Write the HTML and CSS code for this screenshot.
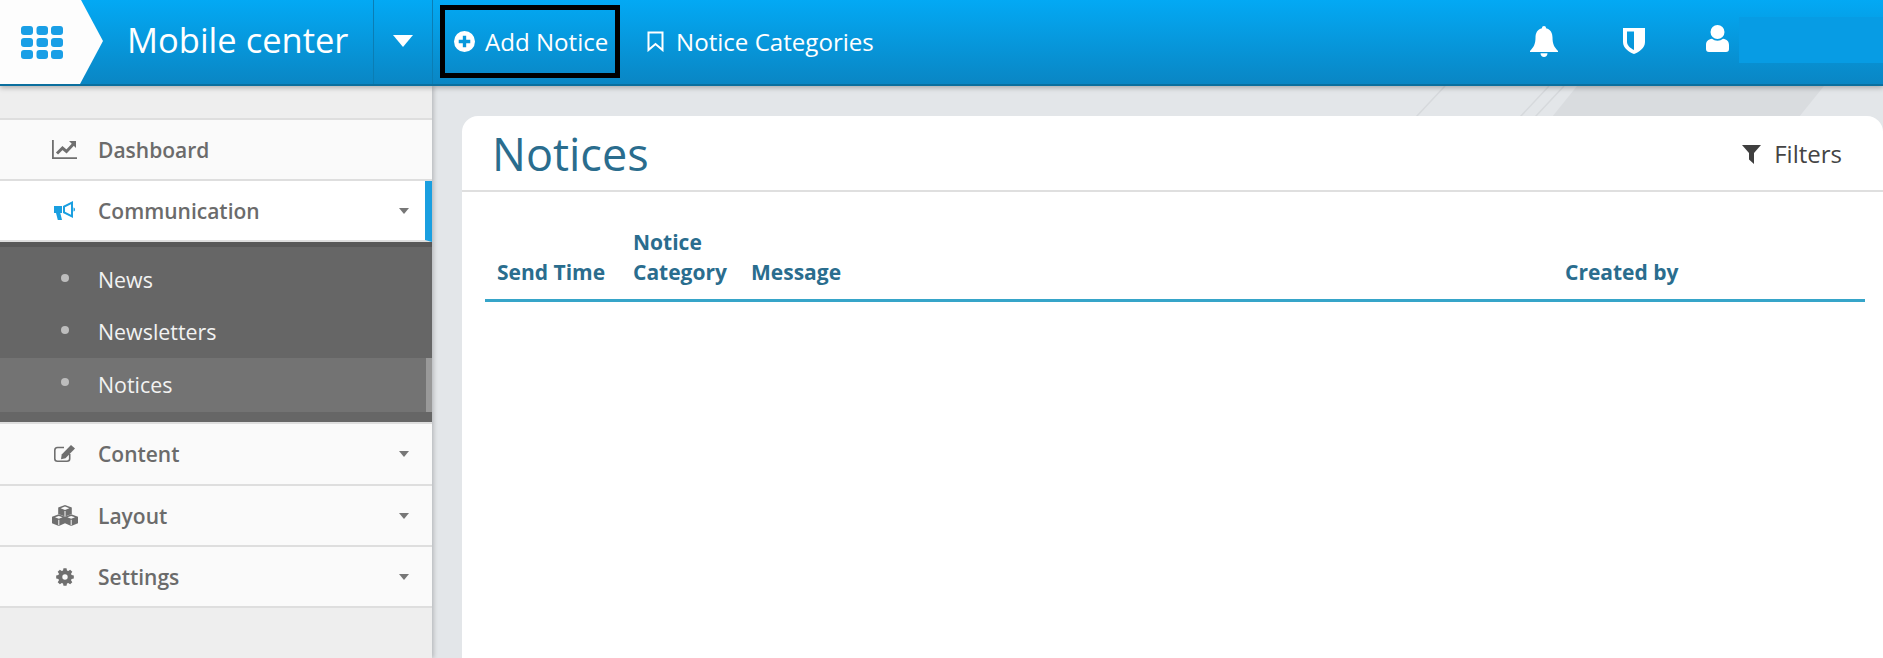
FILE: index.html
```html
<!DOCTYPE html>
<html lang="en">
<head>
<meta charset="utf-8">
<title>Notices</title>
<link rel="stylesheet" href="styles.css">
</head>
<body>
<header class="topbar">
  <div class="logo">
    <svg class="grid-icon" viewBox="0 0 42 33"><g fill="#1a9fe6"><rect x="0" y="0" width="12" height="9" rx="3"/><rect x="15.500" y="0" width="11.500" height="9" rx="3"/><rect x="30" y="0" width="12" height="9" rx="3"/><rect x="0" y="12" width="12" height="9" rx="3"/><rect x="15.500" y="12" width="11.500" height="9" rx="3"/><rect x="30" y="12" width="12" height="9" rx="3"/><rect x="0" y="24" width="12" height="9" rx="3"/><rect x="15.500" y="24" width="11.500" height="9" rx="3"/><rect x="30" y="24" width="12" height="9" rx="3"/></g></svg>
  </div>
  <div class="app-name">Mobile center</div>
  <div class="app-caret"><span class="caret-big"></span></div>
  <nav class="actions">
    <a class="action action-boxed"><svg class="action-icon" viewBox="0 0 20 20"><path fill="#fff" fill-rule="evenodd" d="M10 0a10 10 0 1 0 0 20a10 10 0 0 0 0-20zM8.400 4.500h3.200v3.900h3.900v3.200h-3.900v3.900H8.400v-3.900H4.500V8.400h3.900z"/></svg>Add Notice</a>
    <a class="action"><svg class="action-icon" viewBox="0 0 18 21"><path fill="none" stroke="#fff" stroke-width="2" d="M2 1.500h14v17.500l-7-6l-7 6z"/></svg>Notice Categories</a>
  </nav>
  <div class="top-icons">
    <svg class="bell" viewBox="0 0 28 31"><path fill="#fff" d="M14 0c1.300 0 2 .9 2 2.200c4.600 1 6.500 4.800 6.500 9.300c0 6.500 1.700 9.500 5.500 13.500v1H0v-1c3.800-4 5.500-7 5.500-13.500c0-4.500 1.900-8.300 6.500-9.300C12 .9 12.700 0 14 0z"/><path fill="#fff" d="M10.500 27.200h7c0 2.200-1.500 3.800-3.500 3.800s-3.500-1.600-3.500-3.800z"/></svg>
    <svg class="shield" viewBox="0 0 22 26"><path fill="#fff" fill-rule="evenodd" d="M0 0h22v14c0 6-6 10-11 12C6 24 0 20 0 14zM4 3.500v10.500c0 3 3 6 7 8V3.500z"/></svg>
    <svg class="user" viewBox="0 0 23 27"><circle cx="11.500" cy="7" r="7" fill="#fff"/><path fill="#fff" d="M6 13.800c1.500 1.200 3.300 1.900 5.500 1.900s4-.7 5.500-1.900c3.800.4 6 2.700 6 6.200v4c0 2-1 3-3 3H3c-2 0-3-1-3-3v-4c0-3.500 2.200-5.800 6-6.200z"/></svg>
  </div>
  <div class="redaction"></div>
</header>
<div class="body-row">
  <aside class="sidebar">
    <ul class="menu">
      <li class="menu-item">
        <span class="menu-icon"><svg viewBox="0 0 25 19" width="25" height="19"><path fill="none" stroke="#6f6f6f" stroke-width="1.800" d="M.9 0v18.100H25"/><path fill="none" stroke="#6f6f6f" stroke-width="3" d="M5 13.500l5.500-5.500l4 3.500l7-7.500"/><path fill="#6f6f6f" d="M17 1h7v7z"/></svg></span>
        <span class="menu-label">Dashboard</span>
      </li>
      <li class="menu-item is-open">
        <span class="menu-icon"><svg viewBox="0 0 21 19" width="21" height="19"><path fill="#1a9fe0" d="M0 5h8v7H6.300l1.700 7H3.800L2 12H0z"/><path fill="#1a9fe0" d="M9 5L19 0v17L9 12z"/><path fill="#fff" d="M11 6.300l6-3v10.400l-6-3z"/><path fill="#1a9fe0" d="M19.500 6.500c1 0 1.500 1 1.500 2s-.5 2-1.500 2z"/></svg></span>
        <span class="menu-label">Communication</span>
        <span class="caret"></span>
      </li>
      <li class="submenu">
        <a class="sub-item">News</a>
        <a class="sub-item">Newsletters</a>
        <a class="sub-item is-current">Notices</a>
      </li>
      <li class="menu-item menu-item-tall">
        <span class="menu-icon"><svg viewBox="0 0 21 17" width="21" height="17"><path fill="none" stroke="#6f6f6f" stroke-width="1.600" stroke-linejoin="round" d="M10 2.500H3.500Q.8 2.500.8 5.200v8.500q0 2.500 2.700 2.500H13q2.700 0 2.700-2.500V9"/><path fill="#6f6f6f" d="M17 0l4 3.500l-9.500 9.800l-4.500.9l.7-4.700z"/></svg></span>
        <span class="menu-label">Content</span>
        <span class="caret"></span>
      </li>
      <li class="menu-item">
        <span class="menu-icon"><svg viewBox="0 0 26 21" width="26" height="21"><g fill="#6f6f6f"><path d="M13 0l6.800 2.600v6.400l-6.800 2.600l-6.800-2.600V2.600z"/><path d="M6.800 9.300l6.200 2.400v6.500l-6.200 2.800L0 18.200v-6.500z"/><path d="M19.200 9.300l6.800 2.400v6.500l-6.800 2.800l-6.200-2.800v-6.500z"/></g><g fill="#fafafa"><path d="M13 1.600l4.300 1.700L13 5L8.700 3.300z"/><path d="M6.800 10.900l3.800 1.300l-3.800 1.600L3 12.200z"/><path d="M19.200 10.900l3.800 1.300l-3.800 1.600l-3.800-1.600z"/></g><g fill="none" stroke="#fafafa" stroke-width="1"><path d="M13 6v5M6.800 14.800v5.500M19.200 14.800v5.500"/></g></svg></span>
        <span class="menu-label">Layout</span>
        <span class="caret"></span>
      </li>
      <li class="menu-item">
        <span class="menu-icon"><svg viewBox="-1 0 20 19.600" width="18" height="18"><path fill="#6f6f6f" fill-rule="evenodd" d="M7.300 0h3.400l.5 2.500l1.400.6l2.100-1.400l2.400 2.400l-1.400 2.100l.6 1.400l2.500.5v3.400l-2.500.5l-.6 1.400l1.400 2.100l-2.400 2.400l-2.100-1.400l-1.400.6l-.5 2.500H7.300l-.5-2.500l-1.400-.6l-2.100 1.400l-2.400-2.400l1.400-2.100l-.6-1.400L-.8 11.500V8.100l2.500-.5l.6-1.400L.9 4.100l2.400-2.400l2.100 1.400l1.400-.6zM9 6.800a3 3 0 1 0 0 6a3 3 0 0 0 0-6z"/></svg></span>
        <span class="menu-label">Settings</span>
        <span class="caret"></span>
      </li>
    </ul>
  </aside>
  <main class="main">
    <svg class="stripes" viewBox="0 0 500 31" width="500" height="31"><path fill="#d9dcdf" d="M137 31L162 0h247l-25 31z"/><path fill="none" stroke="#d6d9dc" stroke-width="1.500" d="M1 31L30 0M105 31L134 0M120 31L149 0"/></svg>
    <section class="card">
      <div class="card-head">
        <h1 class="card-title">Notices</h1>
        <div class="filters"><svg class="funnel" viewBox="0 0 19 19"><path fill="#3f3f3f" d="M0 0h19l-7 8v11l-5-4.500V8z"/></svg>Filters</div>
      </div>
      <div class="table-wrap">
        <table class="notice-table">
          <colgroup><col class="col-time"><col class="col-cat"><col class="col-msg"><col class="col-by"></colgroup>
          <thead><tr><th>Send Time</th><th>Notice<br>Category</th><th>Message</th><th>Created by</th></tr></thead>
        </table>
      </div>
    </section>
  </main>
</div>
</body>
</html>
```
FILE: styles.css
```css
* { box-sizing: border-box; }
html, body { margin: 0; height: 100%; overflow: hidden; }
body { font-family: "Open Sans", "Noto Sans", sans-serif; background: #e3e6e9; }

.topbar {
  position: relative;
  z-index: 2;
  display: flex;
  height: 86px;
  background: linear-gradient(#03a9f4, #0a86c4);
  border-bottom: 2px solid #0b6f9e;
  box-shadow: 0 2px 5px rgba(0, 0, 0, .25);
  color: #fff;
}
.logo {
  width: 103px;
  height: 84px;
  display: flex;
  align-items: center;
  padding-left: 21px;
  background: #fdfdfd;
  clip-path: polygon(0 0, 81px 0, 103px 41px, 80px 100%, 0 100%);
}
.grid-icon { width: 42px; height: 33px; }
.app-name {
  width: 270px;
  padding-left: 24px;
  font-size: 34.500px;
  line-height: 80px;
  white-space: nowrap;
}
.app-caret {
  width: 60px;
  display: flex;
  align-items: center;
  justify-content: center;
  border-left: 1px solid #0b7db4;
  border-right: 1px solid #0b7db4;
}
.caret-big {
  width: 0; height: 0;
  border-left: 10px solid transparent;
  border-right: 10px solid transparent;
  border-top: 12px solid #fff;
  margin-bottom: 3px;
}
.actions { display: flex; align-items: center; padding-left: 7px; gap: 25px; padding-bottom: 2px; }
.action {
  display: flex;
  align-items: center;
  gap: 10px;
  font-size: 24.100px;
  white-space: nowrap;
}
.action-boxed {
  height: 73px;
  width: 180px;
  padding-left: 9px;
  border: 5px solid #000;
}
.action-icon { width: 21px; height: 21px; flex: none; }
.top-icons { position: absolute; inset: 0; pointer-events: none; }
.bell { position: absolute; left: 1530px; top: 26px; width: 28px; height: 31px; }
.shield { position: absolute; left: 1623px; top: 28px; width: 22px; height: 26px; }
.user { position: absolute; left: 1706px; top: 25px; width: 23px; height: 27px; }
.redaction {
  position: absolute;
  left: 1739px; right: 0; top: 17px; height: 46px;
  background: #079ce4;
}

.body-row { display: flex; height: calc(100vh - 86px); }

.sidebar {
  flex: none;
  width: 432px;
  padding-top: 32px;
  background: #eeeeee;
  box-shadow: 2px 0 4px rgba(0, 0, 0, .18);
  position: relative;
  z-index: 1;
}
.menu { list-style: none; margin: 0; padding: 0; border-top: 2px solid #dedede; }
.menu-item {
  position: relative;
  display: flex;
  align-items: center;
  height: 61px;
  background: #fafafa;
  border-bottom: 2px solid #dedede;
  font-size: 21px;
  font-weight: 600;
  color: #6b6b6b;
}
.menu-item-tall { height: 62px; padding-bottom: 1px; }
.menu-item.is-open { background: #fff; border-right: 7px solid #1a9fe0; }
.menu-icon { width: 98px; display: flex; justify-content: center; padding-left: 31px; flex: none; }
.menu-label { flex: 1; white-space: nowrap; }
.caret {
  position: absolute;
  left: 399px;
  top: 27px;
  width: 0; height: 0;
  border-left: 5.500px solid transparent;
  border-right: 5.500px solid transparent;
  border-top: 6px solid #777;
}
.submenu {
  display: block;
  height: 182px;
  padding-top: 12px;
  background: #666;
  box-shadow: inset 0 5px 0 #585858;
  border-bottom: 2px solid #dedede;
}
.sub-item {
  position: relative;
  display: block;
  height: 52px;
  line-height: 52px;
  padding-left: 98px;
  font-size: 21.400px;
  color: #f2f2f2;
}
.sub-item::before {
  content: "";
  position: absolute;
  left: 61px;
  top: 20px;
  width: 8px; height: 8px;
  border-radius: 50%;
  background: #bdbdbd;
}
.sub-item.is-current {
  height: 54px;
  line-height: 54px;
  background: #737373;
  border-right: 6px solid #999;
}

.main { position: relative; flex: 1; padding: 30px 0 0 30px; overflow: hidden; }
.stripes { position: absolute; left: 983px; top: 0; }
.card {
  position: relative;
  height: 100%;
  background: #fff;
  border-radius: 16px 16px 0 0;
}
.card-head {
  display: flex;
  align-items: center;
  justify-content: space-between;
  height: 76px;
  padding: 0 41px 0 30px;
  border-bottom: 2px solid #dfdfdf;
}
.card-title { margin: 0; font-size: 45px; font-weight: 400; color: #2a6d8e; }
.filters { display: flex; align-items: center; gap: 13px; font-size: 24px; color: #444; }
.funnel { width: 19px; height: 19px; margin-top: 3px; }
.table-wrap { padding: 35px 18px 0 23px; }
.notice-table { width: 100%; table-layout: fixed; border-collapse: collapse; }
.col-time { width: 136px; }
.col-cat { width: 118px; }
.col-by { width: 312px; }
.notice-table th {
  padding: 0 12px 12px;
  vertical-align: bottom;
  text-align: left;
  font-size: 21px;
  font-weight: 700;
  line-height: 30px;
  color: #2a6d8e;
  border-bottom: 3px solid #36a5c9;
}
```
